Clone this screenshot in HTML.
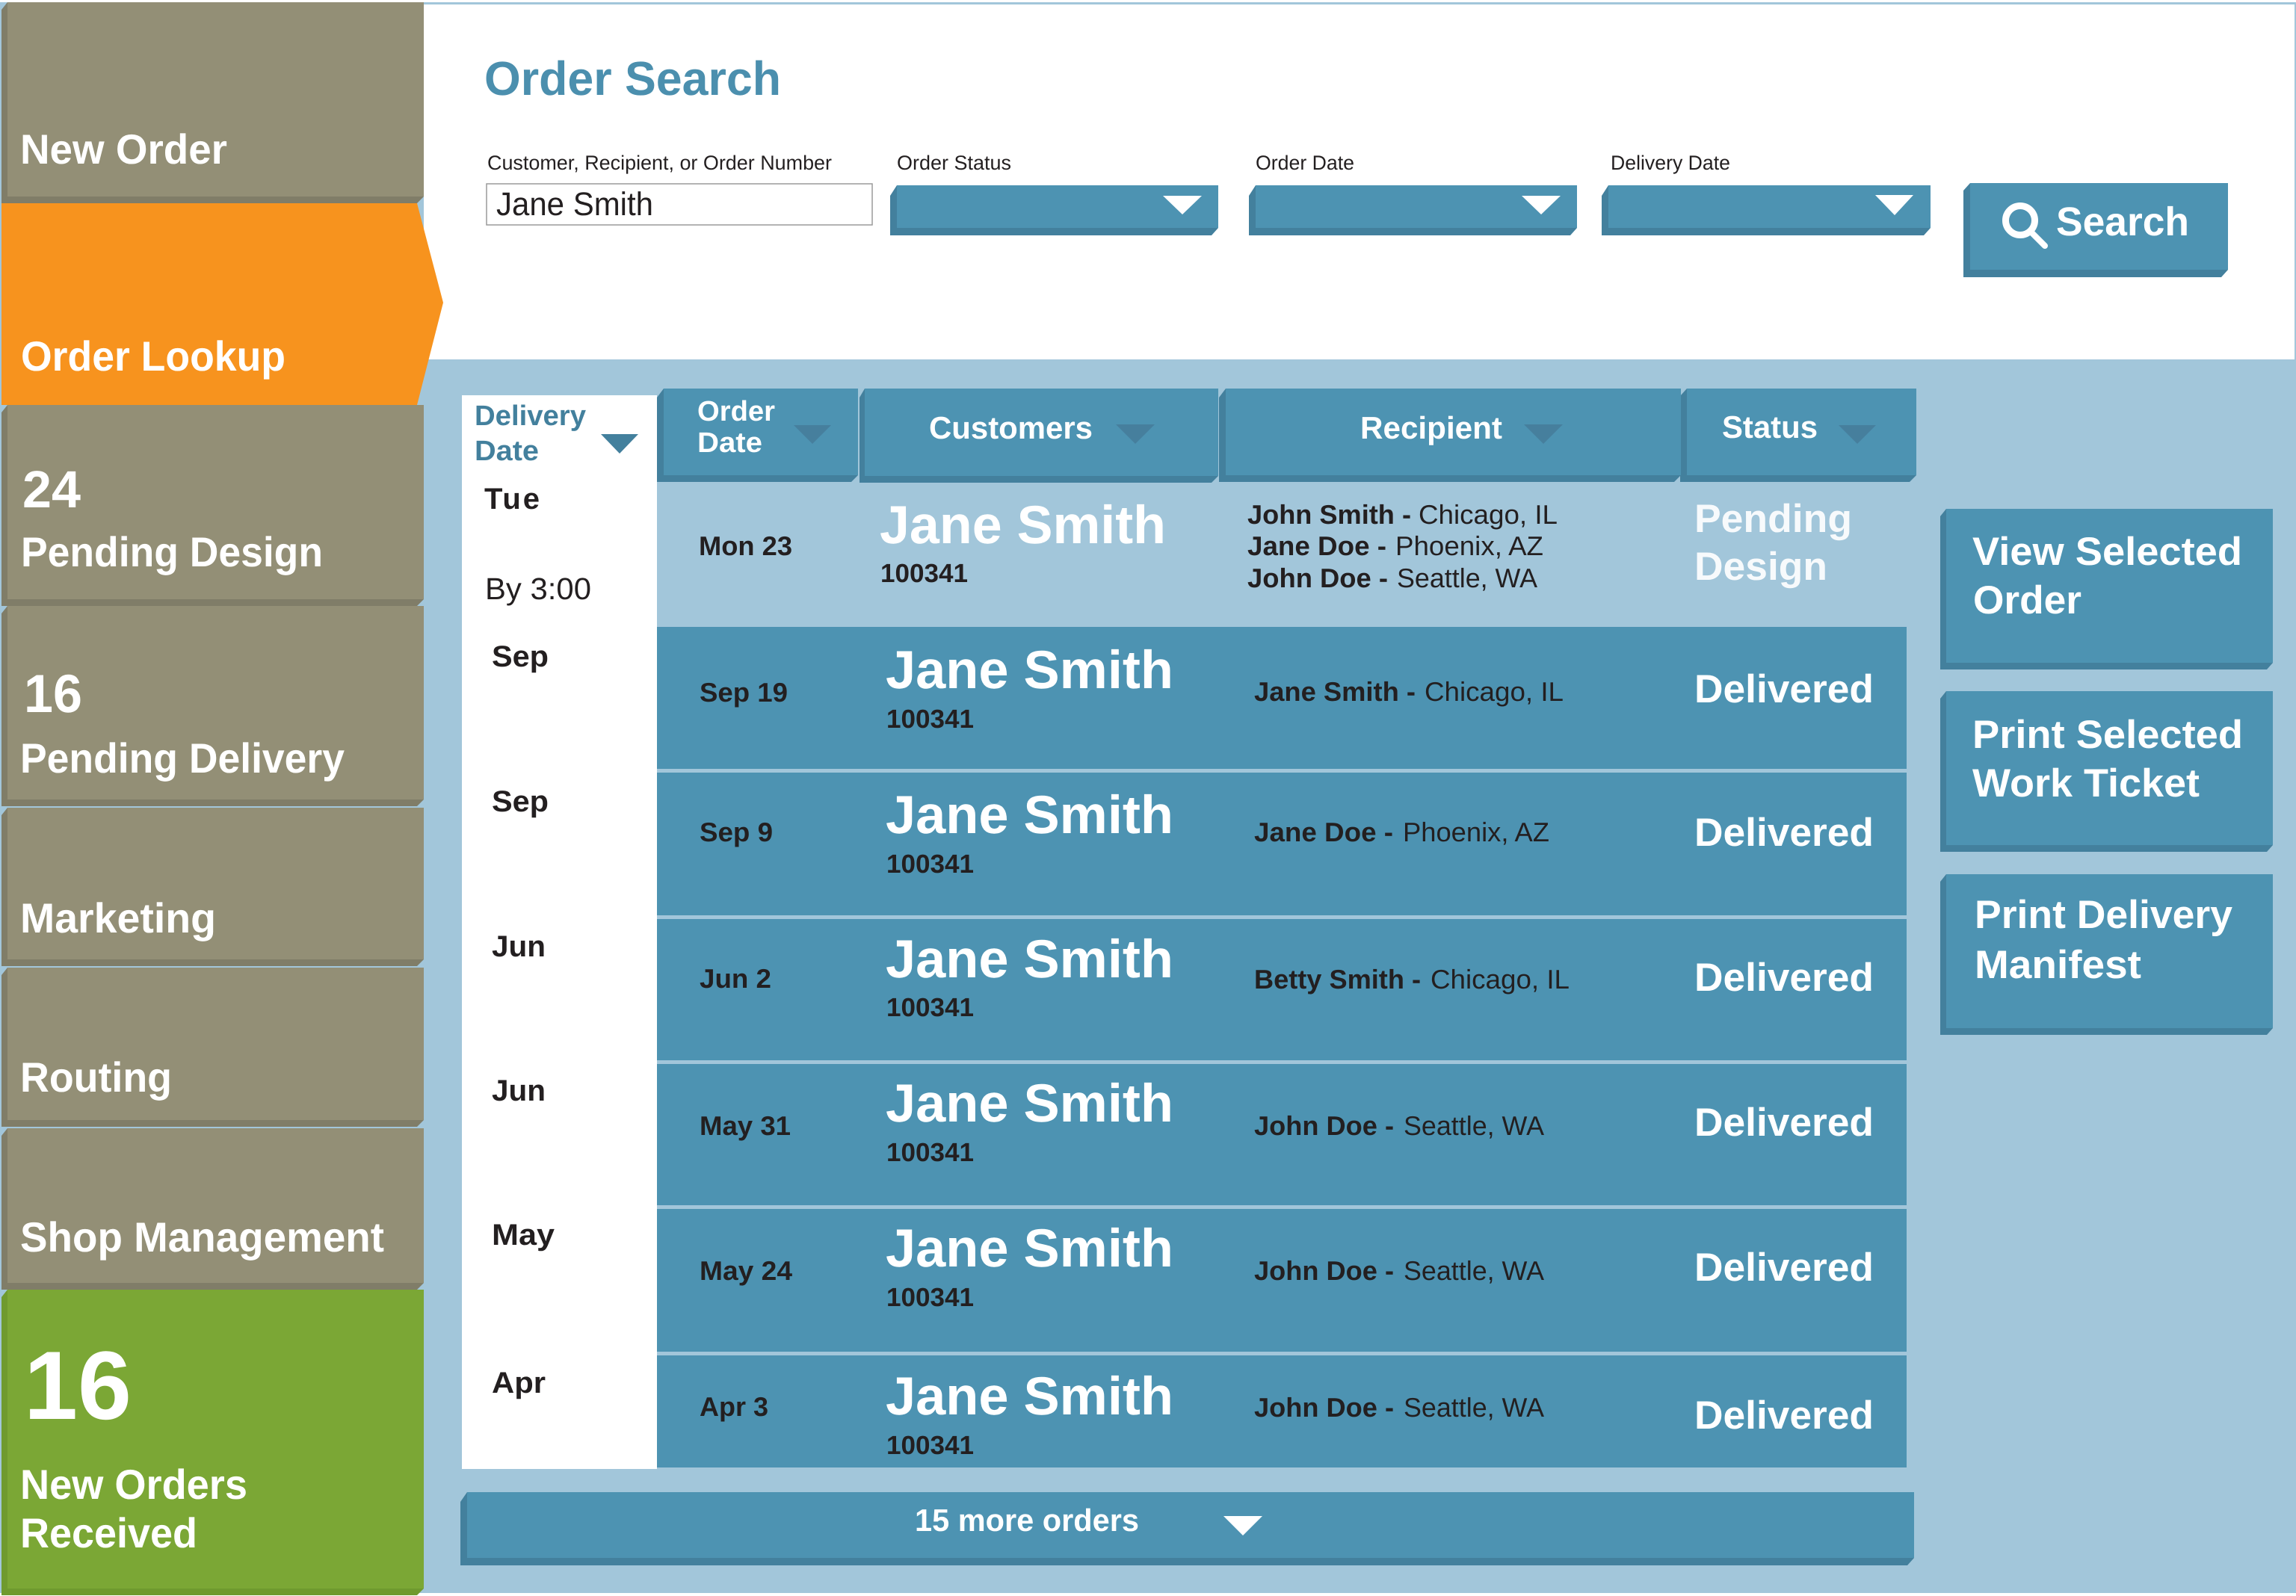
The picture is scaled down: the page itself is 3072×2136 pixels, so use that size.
<!DOCTYPE html>
<html><head><meta charset="utf-8"><title>Order Search</title>
<style>
html,body{margin:0;padding:0;background:#fff}
svg{display:block}
text{font-family:"Liberation Sans",Arial,sans-serif;text-rendering:geometricPrecision;white-space:pre}
.b{font-weight:700}.w{fill:#fff}.d{fill:#231f20}.t{fill:#4b8fae}
</style></head><body>
<svg xmlns="http://www.w3.org/2000/svg" width="3072" height="2136" viewBox="0 0 3072 2136">
<rect width="3072" height="2136" fill="#fff"/>
<rect x="0" y="3" width="3072" height="2129" fill="#a2c6da"/>
<rect x="567" y="6" width="2503" height="475" fill="#fff"/>

<!-- nav -->
<g fill="#807d68">
<polygon points="10,3 567,3 567,263 558,272 2,272 2,13"/>
<polygon points="10,542 567,542 567,802 558,811 2,811 2,552"/>
<polygon points="10,811 567,811 567,1070 558,1079 2,1079 2,821"/>
<polygon points="10,1081 567,1081 567,1284 558,1293 2,1293 2,1091"/>
<polygon points="10,1295 567,1295 567,1499 558,1508 2,1508 2,1305"/>
<polygon points="10,1510 567,1510 567,1717 558,1726 2,1726 2,1520"/>
</g>
<g fill="#938f76">
<rect x="10" y="3" width="557" height="260"/>
<rect x="10" y="542" width="557" height="260"/>
<rect x="10" y="811" width="557" height="259"/>
<rect x="10" y="1081" width="557" height="203"/>
<rect x="10" y="1295" width="557" height="204"/>
<rect x="10" y="1510" width="557" height="207"/>
</g>
<polygon points="10,1726 567,1726 567,2126 558,2135 2,2135 2,1736" fill="#6f9a2e"/>
<rect x="10" y="1726" width="557" height="400" fill="#7ba735"/>
<polygon points="2,272 558,272 593,405 558,542 2,542" fill="#f7931e"/>

<g class="b w">
<text class="b w" x="27" y="219" font-size="56" textLength="277" lengthAdjust="spacingAndGlyphs">New Order</text>
<text class="b w" x="28" y="496" font-size="56" textLength="354" lengthAdjust="spacingAndGlyphs">Order Lookup</text>
<text class="b w" x="30" y="679" font-size="70" textLength="78" lengthAdjust="spacingAndGlyphs">24</text>
<text class="b w" x="28" y="758" font-size="56" textLength="404" lengthAdjust="spacingAndGlyphs">Pending Design</text>
<text class="b w" x="32" y="953" font-size="72" textLength="78" lengthAdjust="spacingAndGlyphs">16</text>
<text class="b w" x="27" y="1034" font-size="56" textLength="434" lengthAdjust="spacingAndGlyphs">Pending Delivery</text>
<text class="b w" x="27" y="1248" font-size="56" textLength="262" lengthAdjust="spacingAndGlyphs">Marketing</text>
<text class="b w" x="27" y="1461" font-size="56" textLength="203" lengthAdjust="spacingAndGlyphs">Routing</text>
<text class="b w" x="27" y="1675" font-size="56" textLength="487" lengthAdjust="spacingAndGlyphs">Shop Management</text>
<text class="b w" x="32" y="1899" font-size="130" textLength="144" lengthAdjust="spacingAndGlyphs">16</text>
<text class="b w" x="27" y="2006" font-size="56" textLength="304" lengthAdjust="spacingAndGlyphs">New Orders</text>
<text class="b w" x="27" y="2071" font-size="56" textLength="237" lengthAdjust="spacingAndGlyphs">Received</text>
</g>

<!-- search panel -->
<text class="b t" x="648" y="127" font-size="64" textLength="397" lengthAdjust="spacingAndGlyphs">Order Search</text>
<text class="d" x="652" y="227" font-size="27" textLength="461" lengthAdjust="spacingAndGlyphs">Customer, Recipient, or Order Number</text>
<text class="d" x="1200" y="227" font-size="27" textLength="153" lengthAdjust="spacingAndGlyphs">Order Status</text>
<text class="d" x="1680" y="227" font-size="27" textLength="132" lengthAdjust="spacingAndGlyphs">Order Date</text>
<text class="d" x="2155" y="227" font-size="27" textLength="160" lengthAdjust="spacingAndGlyphs">Delivery Date</text>
<rect x="651" y="246" width="516" height="55" fill="#fff" stroke="#9a9a9a" stroke-width="1.5"/>
<text class="d" x="664" y="288" font-size="44" textLength="210" lengthAdjust="spacingAndGlyphs">Jane Smith</text>

<g fill="#43809d">
<polygon points="1200,248 1630,248 1630,305 1621,315 1191,315 1191,262"/>
<polygon points="1680,248 2110,248 2110,305 2101,315 1671,315 1671,262"/>
<polygon points="2152,248 2583,248 2583,305 2574,315 2143,315 2143,262"/>
<polygon points="2636,245 2981,245 2981,361 2972,371 2627,371 2627,255"/>
<polygon points="888,520 1148,520 1148,636 1139,645 879,645 879,532"/>
<polygon points="1157,520 1630,520 1630,637 1621,646 1150,646 1150,532"/>
<polygon points="1640,520 2249,520 2249,636 2240,645 1631,645 1631,532"/>
<polygon points="2257,520 2564,520 2564,636 2555,645 2248,645 2248,530"/>
<polygon points="2604,681 3041,681 3041,887 3033,896 2596,896 2596,691"/>
<polygon points="2604,925 3041,925 3041,1131 3033,1140 2596,1140 2596,935"/>
<polygon points="2604,1170 3041,1170 3041,1376 3033,1385 2596,1385 2596,1180"/>
<polygon points="625,1997 2561,1997 2561,2085 2552,2095 616,2095 616,2010"/>
</g>
<g fill="#4d93b2">
<rect x="1200" y="248" width="430" height="57"/>
<rect x="1680" y="248" width="430" height="57"/>
<rect x="2152" y="248" width="431" height="57"/>
<rect x="2636" y="245" width="345" height="116"/>
<rect x="888" y="520" width="260" height="116"/>
<rect x="1157" y="520" width="473" height="117"/>
<rect x="1640" y="520" width="609" height="116"/>
<rect x="2257" y="520" width="307" height="116"/>
<rect x="2604" y="681" width="437" height="206"/>
<rect x="2604" y="925" width="437" height="206"/>
<rect x="2604" y="1170" width="437" height="206"/>
<rect x="625" y="1997" width="1936" height="88"/>
</g>
<g fill="#fff">
<polygon points="1556,262 1608,262 1582,287"/>
<polygon points="2036,262 2088,262 2062,287"/>
<polygon points="2509,261 2560,261 2535,288"/>
<polygon points="1637,2029 1689,2029 1663,2055"/>
</g>
<circle cx="2703" cy="295" r="19.5" fill="none" stroke="#fff" stroke-width="9"/>
<line x1="2717" y1="310" x2="2736" y2="329" stroke="#fff" stroke-width="8" stroke-linecap="round"/>
<text class="b w" x="2751" y="315" font-size="54" textLength="178" lengthAdjust="spacingAndGlyphs">Search</text>

<!-- white column -->
<rect x="618" y="529" width="261" height="1437" fill="#fff"/>
<text class="b" fill="#43809d" x="635" y="569" font-size="38" textLength="149" lengthAdjust="spacingAndGlyphs">Delivery</text>
<text class="b" fill="#43809d" x="635" y="616" font-size="38" textLength="86" lengthAdjust="spacingAndGlyphs">Date</text>
<polygon points="804,581 854,581 829,607" fill="#43809d"/>
<text class="b d" x="648" y="681" font-size="40" textLength="74" lengthAdjust="spacing">Tue</text>
<text class="d" x="649" y="802" font-size="41" textLength="142" lengthAdjust="spacingAndGlyphs">By 3:00</text>
<text class="b d" x="658" y="892" font-size="40" textLength="76" lengthAdjust="spacingAndGlyphs">Sep</text>
<text class="b d" x="658" y="1086" font-size="40" textLength="76" lengthAdjust="spacingAndGlyphs">Sep</text>
<text class="b d" x="658" y="1280" font-size="40" textLength="72" lengthAdjust="spacingAndGlyphs">Jun</text>
<text class="b d" x="658" y="1473" font-size="40" textLength="72" lengthAdjust="spacingAndGlyphs">Jun</text>
<text class="b d" x="658" y="1666" font-size="40" textLength="84" lengthAdjust="spacingAndGlyphs">May</text>
<text class="b d" x="658" y="1864" font-size="40" textLength="72" lengthAdjust="spacingAndGlyphs">Apr</text>

<!-- header text -->
<text class="b w" x="933" y="563" font-size="38" textLength="104" lengthAdjust="spacingAndGlyphs">Order</text>
<text class="b w" x="933" y="605" font-size="38" textLength="87" lengthAdjust="spacingAndGlyphs">Date</text>
<text class="b w" x="1243" y="587" font-size="42" textLength="219" lengthAdjust="spacingAndGlyphs">Customers</text>
<text class="b w" x="1820" y="587" font-size="42" textLength="190" lengthAdjust="spacingAndGlyphs">Recipient</text>
<text class="b w" x="2304" y="586" font-size="42" textLength="128" lengthAdjust="spacingAndGlyphs">Status</text>
<g fill="#467f9d">
<polygon points="1062,569 1112,569 1087,594"/>
<polygon points="1493,568 1545,568 1519,594"/>
<polygon points="2039,568 2091,568 2065,594"/>
<polygon points="2460,569 2510,569 2485,594"/>
</g>

<!-- rows -->
<rect x="879" y="839" width="1672" height="1125" fill="#4d93b2"/>
<g fill="#a2c6da">
<rect x="879" y="1029" width="1672" height="5"/>
<rect x="879" y="1225" width="1672" height="5"/>
<rect x="879" y="1419" width="1672" height="5"/>
<rect x="879" y="1613" width="1672" height="5"/>
<rect x="879" y="1809" width="1672" height="5"/>
</g>

<text class="b d" x="935" y="743" font-size="36" textLength="125" lengthAdjust="spacingAndGlyphs">Mon 23</text>
<text class="b w" x="1177" y="727" font-size="72" textLength="383" lengthAdjust="spacingAndGlyphs">Jane Smith</text>
<text class="b d" x="1178" y="779" font-size="35" textLength="117" lengthAdjust="spacingAndGlyphs">100341</text>
<text class="b d" x="1669" y="701" font-size="36" textLength="219" lengthAdjust="spacingAndGlyphs">John Smith -</text>
<text class="d" x="1898" y="701" font-size="36" textLength="186" lengthAdjust="spacingAndGlyphs">Chicago, IL</text>
<text class="b d" x="1669" y="743" font-size="36" textLength="186" lengthAdjust="spacingAndGlyphs">Jane Doe -</text>
<text class="d" x="1867" y="743" font-size="36" textLength="198" lengthAdjust="spacingAndGlyphs">Phoenix, AZ</text>
<text class="b d" x="1669" y="786" font-size="36" textLength="188" lengthAdjust="spacingAndGlyphs">John Doe -</text>
<text class="d" x="1869" y="786" font-size="36" textLength="188" lengthAdjust="spacingAndGlyphs">Seattle, WA</text>
<text class="b" fill="#f7fafc" x="2267" y="712" font-size="53" textLength="211" lengthAdjust="spacingAndGlyphs">Pending</text>
<text class="b" fill="#f7fafc" x="2267" y="776" font-size="53" textLength="178" lengthAdjust="spacingAndGlyphs">Design</text>

<text class="b d" x="936" y="939" font-size="36" textLength="118" lengthAdjust="spacingAndGlyphs">Sep 19</text>
<text class="b w" x="1185" y="921" font-size="72" textLength="385" lengthAdjust="spacingAndGlyphs">Jane Smith</text>
<text class="b d" x="1186" y="974" font-size="35" textLength="117" lengthAdjust="spacingAndGlyphs">100341</text>
<text class="b d" x="1678" y="938" font-size="36" textLength="216" lengthAdjust="spacingAndGlyphs">Jane Smith -</text>
<text class="d" x="1906" y="938" font-size="36" textLength="186" lengthAdjust="spacingAndGlyphs">Chicago, IL</text>
<text class="b w" x="2267" y="940" font-size="53" textLength="240" lengthAdjust="spacingAndGlyphs">Delivered</text>

<text class="b d" x="936" y="1126" font-size="36" textLength="98" lengthAdjust="spacingAndGlyphs">Sep 9</text>
<text class="b w" x="1185" y="1115" font-size="72" textLength="385" lengthAdjust="spacingAndGlyphs">Jane Smith</text>
<text class="b d" x="1186" y="1168" font-size="35" textLength="117" lengthAdjust="spacingAndGlyphs">100341</text>
<text class="b d" x="1678" y="1126" font-size="36" textLength="186" lengthAdjust="spacingAndGlyphs">Jane Doe -</text>
<text class="d" x="1877" y="1126" font-size="36" textLength="196" lengthAdjust="spacingAndGlyphs">Phoenix, AZ</text>
<text class="b w" x="2267" y="1132" font-size="53" textLength="240" lengthAdjust="spacingAndGlyphs">Delivered</text>

<text class="b d" x="936" y="1322" font-size="36" textLength="96" lengthAdjust="spacingAndGlyphs">Jun 2</text>
<text class="b w" x="1185" y="1308" font-size="72" textLength="385" lengthAdjust="spacingAndGlyphs">Jane Smith</text>
<text class="b d" x="1186" y="1360" font-size="35" textLength="117" lengthAdjust="spacingAndGlyphs">100341</text>
<text class="b d" x="1678" y="1323" font-size="36" textLength="223" lengthAdjust="spacingAndGlyphs">Betty Smith -</text>
<text class="d" x="1914" y="1323" font-size="36" textLength="186" lengthAdjust="spacingAndGlyphs">Chicago, IL</text>
<text class="b w" x="2267" y="1326" font-size="53" textLength="240" lengthAdjust="spacingAndGlyphs">Delivered</text>

<text class="b d" x="936" y="1519" font-size="36" textLength="122" lengthAdjust="spacingAndGlyphs">May 31</text>
<text class="b w" x="1185" y="1501" font-size="72" textLength="385" lengthAdjust="spacingAndGlyphs">Jane Smith</text>
<text class="b d" x="1186" y="1554" font-size="35" textLength="117" lengthAdjust="spacingAndGlyphs">100341</text>
<text class="b d" x="1678" y="1519" font-size="36" textLength="187" lengthAdjust="spacingAndGlyphs">John Doe -</text>
<text class="d" x="1878" y="1519" font-size="36" textLength="188" lengthAdjust="spacingAndGlyphs">Seattle, WA</text>
<text class="b w" x="2267" y="1520" font-size="53" textLength="240" lengthAdjust="spacingAndGlyphs">Delivered</text>

<text class="b d" x="936" y="1713" font-size="36" textLength="124" lengthAdjust="spacingAndGlyphs">May 24</text>
<text class="b w" x="1185" y="1695" font-size="72" textLength="385" lengthAdjust="spacingAndGlyphs">Jane Smith</text>
<text class="b d" x="1186" y="1748" font-size="35" textLength="117" lengthAdjust="spacingAndGlyphs">100341</text>
<text class="b d" x="1678" y="1713" font-size="36" textLength="187" lengthAdjust="spacingAndGlyphs">John Doe -</text>
<text class="d" x="1878" y="1713" font-size="36" textLength="188" lengthAdjust="spacingAndGlyphs">Seattle, WA</text>
<text class="b w" x="2267" y="1714" font-size="53" textLength="240" lengthAdjust="spacingAndGlyphs">Delivered</text>

<text class="b d" x="936" y="1895" font-size="36" textLength="92" lengthAdjust="spacingAndGlyphs">Apr 3</text>
<text class="b w" x="1185" y="1893" font-size="72" textLength="385" lengthAdjust="spacingAndGlyphs">Jane Smith</text>
<text class="b d" x="1186" y="1946" font-size="35" textLength="117" lengthAdjust="spacingAndGlyphs">100341</text>
<text class="b d" x="1678" y="1896" font-size="36" textLength="187" lengthAdjust="spacingAndGlyphs">John Doe -</text>
<text class="d" x="1878" y="1896" font-size="36" textLength="188" lengthAdjust="spacingAndGlyphs">Seattle, WA</text>
<text class="b w" x="2267" y="1912" font-size="53" textLength="240" lengthAdjust="spacingAndGlyphs">Delivered</text>

<!-- right buttons -->
<text class="b w" x="2639" y="756" font-size="53" textLength="361" lengthAdjust="spacingAndGlyphs">View Selected</text>
<text class="b w" x="2640" y="821" font-size="53" textLength="145" lengthAdjust="spacingAndGlyphs">Order</text>
<text class="b w" x="2639" y="1001" font-size="53" textLength="362" lengthAdjust="spacingAndGlyphs">Print Selected</text>
<text class="b w" x="2639" y="1066" font-size="53" textLength="304" lengthAdjust="spacingAndGlyphs">Work Ticket</text>
<text class="b w" x="2642" y="1242" font-size="53" textLength="345" lengthAdjust="spacingAndGlyphs">Print Delivery</text>
<text class="b w" x="2642" y="1309" font-size="53" textLength="223" lengthAdjust="spacingAndGlyphs">Manifest</text>

<text class="b w" x="1224" y="2049" font-size="42" textLength="300" lengthAdjust="spacingAndGlyphs">15 more orders</text>
</svg>
</body></html>
